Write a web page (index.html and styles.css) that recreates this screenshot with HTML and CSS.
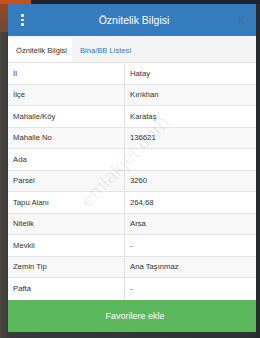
FILE: index.html
```html
<!DOCTYPE html>
<html lang="tr">
<head>
<meta charset="utf-8">
<link rel="stylesheet" href="styles.css">
</head>
<body>
<div class="modal">
  <div class="header">
    <span class="kebab"><i></i><i></i><i></i></span>
    <span class="title">Öznitelik Bilgisi</span>
    <span class="close">×</span>
  </div>
  <div class="tabs">
    <span class="tab active">Öznitelik Bilgisi</span>
    <span class="tab">Bina/BB Listesi</span>
  </div>
  <div class="table">
    <div class="row"><div class="k">İl</div><div class="v">Hatay</div></div>
    <div class="row alt"><div class="k">İlçe</div><div class="v">Kırıkhan</div></div>
    <div class="row"><div class="k">Mahalle/Köy</div><div class="v">Karataş</div></div>
    <div class="row alt"><div class="k">Mahalle No</div><div class="v">136621</div></div>
    <div class="row"><div class="k">Ada</div><div class="v"></div></div>
    <div class="row alt"><div class="k">Parsel</div><div class="v">3260</div></div>
    <div class="row"><div class="k">Tapu Alanı</div><div class="v">264,68</div></div>
    <div class="row alt"><div class="k">Nitelik</div><div class="v">Arsa</div></div>
    <div class="row"><div class="k">Mevkii</div><div class="v">-</div></div>
    <div class="row alt"><div class="k">Zemin Tip</div><div class="v">Ana Taşınmaz</div></div>
    <div class="row"><div class="k">Pafta</div><div class="v">-</div></div>
    <span class="watermark">emlakjet.com</span>
  </div>
  <div class="fav">Favorilere ekle</div>
</div>
</body>
</html>
```

FILE: styles.css
```css
* { box-sizing: border-box; }
html, body { margin: 0; padding: 0; }
body {
  width: 260px;
  height: 338px;
  overflow: hidden;
  font-family: "Liberation Sans", Arial, sans-serif;
  background:
    linear-gradient(#c0531f, #c0531f) 0 0 / 31px 4px no-repeat,
    linear-gradient(#9c4a22, #6a4a3a) 0 0 / 8px 32px no-repeat,
    linear-gradient(#1c2333, #1c2333) 0 0 / 260px 4px no-repeat,
    linear-gradient(90deg, #4a4640, #3a3a3c 10px, #2e3034 250px, #26282c);
  padding-top: 4px;
}
.modal {
  margin-left: 8px;
  width: 248px;
  background: #fff;
  display: flex;
  flex-direction: column;
}
.header {
  height: 32px;
  background: #357cbe;
  display: flex;
  align-items: center;
}
.kebab {
  width: 28px;
  display: flex;
  flex-direction: column;
  align-items: center;
  gap: 2px;
  padding-left: 1px;
}
.kebab i {
  display: block;
  width: 2.6px;
  height: 2.6px;
  border-radius: 50%;
  background: #fff;
}
.title {
  flex: 1;
  text-align: center;
  color: #fff;
  font-size: 10.5px;
  padding-left: 4px;
}
.close {
  width: 28px;
  text-align: center;
  color: #4f7297;
  font-size: 12px;
  font-weight: bold;
  padding-right: 1px;
}
.tabs {
  height: 27px;
  background: #f4f4f4;
  display: flex;
  align-items: flex-end;
  border-bottom: 1px solid #e2e2e2;
}
.tab {
  height: 24px;
  display: flex;
  align-items: center;
  padding: 0 7px 0 8px;
  font-size: 7.6px;
  color: #337ab7;
}
.tab.active {
  background: #fff;
  color: #333;
  width: 64px;
  padding: 0 0 0 8px;
}
.table {
  position: relative;
  overflow: hidden;
}
.row {
  display: grid;
  grid-template-columns: 117px 1fr;
  height: 21.5px;
  border-bottom: 1px solid #e4e4e4;
  font-size: 7.7px;
  color: #333;
}
.row.alt { background: #f8f8f8; }
.row:last-of-type { border-bottom: none; }
.k, .v {
  display: flex;
  align-items: center;
}
.k { padding-left: 5px; border-right: 1px solid #e4e4e4; }
.v { padding-left: 5px; }
.watermark {
  position: absolute;
  left: 58px;
  top: 87px;
  font-size: 20px;
  color: rgba(0, 0, 0, 0.065);
  transform: rotate(-46deg);
  transform-origin: center;
  pointer-events: none;
  white-space: nowrap;
}
.fav {
  height: 32px;
  background: #5cb85c;
  color: #fff;
  font-size: 9px;
  display: flex;
  align-items: center;
  justify-content: center;
  padding-left: 6px;
}
```
